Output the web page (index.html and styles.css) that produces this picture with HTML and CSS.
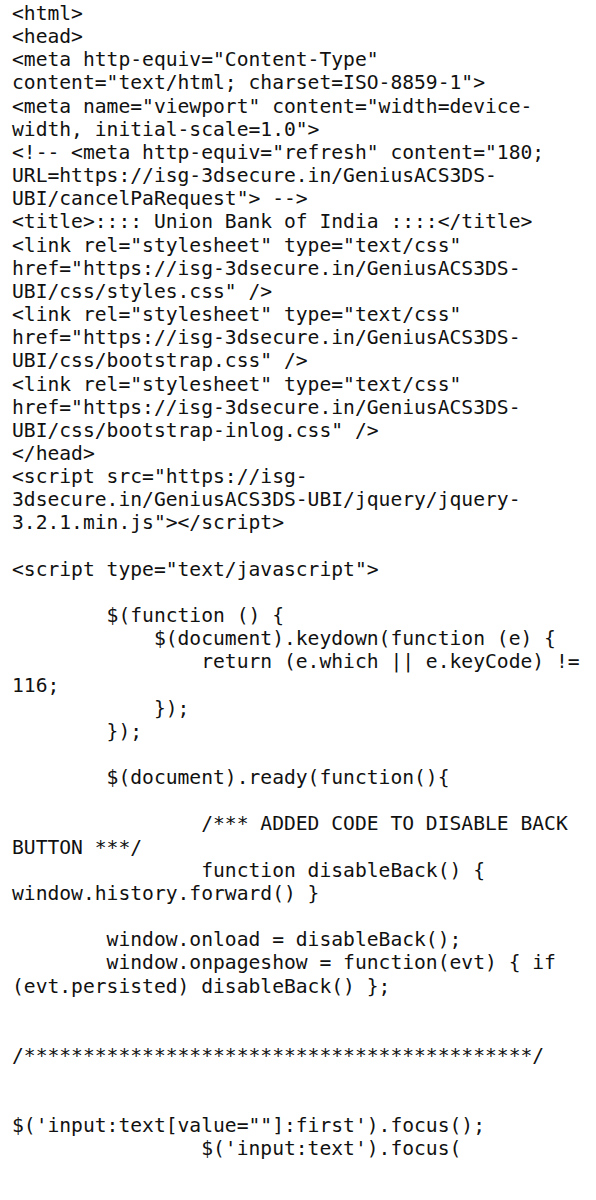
FILE: index.html
```
<!DOCTYPE html>
<html>
<head>
<meta charset="utf-8">
<title>Source</title>
<link rel="stylesheet" href="styles.css">
</head>
<body class="page">
<pre class="source">&lt;html&gt;
&lt;head&gt;
&lt;meta http-equiv="Content-Type"
content="text/html; charset=ISO-8859-1"&gt;
&lt;meta name="viewport" content="width=device-
width, initial-scale=1.0"&gt;
&lt;!-- &lt;meta http-equiv="refresh" content="180;
URL=https://isg-3dsecure.in/GeniusACS3DS-
UBI/cancelPaRequest"&gt; --&gt;
&lt;title&gt;:::: Union Bank of India ::::&lt;/title&gt;
&lt;link rel="stylesheet" type="text/css"
href="https://isg-3dsecure.in/GeniusACS3DS-
UBI/css/styles.css" /&gt;
&lt;link rel="stylesheet" type="text/css"
href="https://isg-3dsecure.in/GeniusACS3DS-
UBI/css/bootstrap.css" /&gt;
&lt;link rel="stylesheet" type="text/css"
href="https://isg-3dsecure.in/GeniusACS3DS-
UBI/css/bootstrap-inlog.css" /&gt;
&lt;/head&gt;
&lt;script src="https://isg-
3dsecure.in/GeniusACS3DS-UBI/jquery/jquery-
3.2.1.min.js"&gt;&lt;/script&gt;

&lt;script type="text/javascript"&gt;

        $(function () {
            $(document).keydown(function (e) {
                return (e.which || e.keyCode) !=
116;
            });
        });

        $(document).ready(function(){

                /*** ADDED CODE TO DISABLE BACK
BUTTON ***/
                function disableBack() {
window.history.forward() }

        window.onload = disableBack();
        window.onpageshow = function(evt) { if
(evt.persisted) disableBack() };


/*******************************************/


$('input:text[value=""]:first').focus();
                $('input:text').focus(
</pre>
</body>
</html>
```
FILE: styles.css
```
html, body {
  margin: 0;
  padding: 0;
  background: #ffffff;
}

.page {
  width: 596px;
  min-height: 1200px;
}

.source {
  margin: 0;
  padding: 2px 12px 0 12px;
  font-family: "DejaVu Sans Mono", "Liberation Mono", monospace;
  font-size: 19.65px;
  line-height: 23.15px;
  color: #111111;
  white-space: pre;
}
```
